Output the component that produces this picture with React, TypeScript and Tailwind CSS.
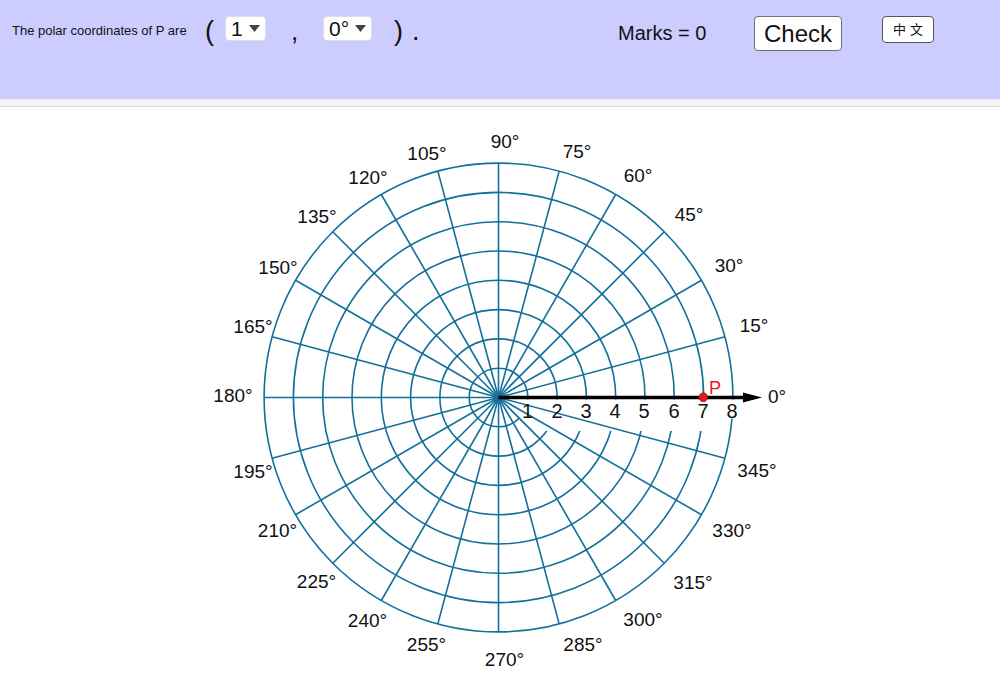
import React from "react";

const CX = 498.5;
const CY = 397.5;
const U = 29.3;
const GRID = "#12709a";

const degreeLabels: [string, number, number][] = [
  ["90°", 505, 141],
  ["75°", 577, 151],
  ["60°", 638, 175],
  ["45°", 689, 214.5],
  ["30°", 729, 265.5],
  ["15°", 754, 325.5],
  ["0°", 777, 396],
  ["345°", 757, 470.5],
  ["330°", 732, 530.5],
  ["315°", 693, 582.5],
  ["300°", 643, 619.5],
  ["285°", 583, 644.5],
  ["270°", 504.5, 659.5],
  ["255°", 426.5, 644.5],
  ["240°", 367.5, 620.5],
  ["225°", 316.5, 581],
  ["210°", 277.5, 530],
  ["195°", 253, 471],
  ["180°", 233, 395.5],
  ["165°", 253, 326],
  ["150°", 278, 267.5],
  ["135°", 317, 216.5],
  ["120°", 368, 177.5],
  ["105°", 427, 153],
];

const numberX = [527.5, 557, 586, 615, 644, 674, 703, 732];

function Caret() {
  return (
    <svg width="11" height="7" viewBox="0 0 11 7" className="block">
      <polygon points="0,0 11,0 5.5,7" fill="#444" />
    </svg>
  );
}

function Dropdown({ value, width }: { value: string; width: string }) {
  return (
    <div
      className={`${width} h-[25px] mt-[16px] bg-white border border-[#dcdcea] rounded-[4px] flex items-center pl-[5px] gap-[6px]`}
    >
      <span className="text-[21px] leading-none text-[#111]">{value}</span>
      <Caret />
    </div>
  );
}

function PolarGrid() {
  const R = 8 * U;
  const spokes = Array.from({ length: 24 }, (_, k) => {
    const a = (k * 15 * Math.PI) / 180;
    return { x: CX + R * Math.cos(a), y: CY - R * Math.sin(a) };
  });
  const font = "Liberation Sans, Arial, sans-serif";

  return (
    <svg width="1000" height="583" viewBox="0 107 1000 583" className="block">
      {[1, 2, 3, 4, 5, 6, 7].map((r) => (
        <circle key={r} cx={CX} cy={CY} r={r * U} fill="none" stroke={GRID} strokeWidth="1.6" />
      ))}
      {/* label background hides arcs under the numbers */}
      <rect x="519" y="399.5" width="226" height="31.5" fill="white" />
      {spokes.map((p, i) => (
        <line key={i} x1={CX} y1={CY} x2={p.x} y2={p.y} stroke={GRID} strokeWidth="1.6" />
      ))}
      <circle cx={CX} cy={CY} r={R} fill="none" stroke={GRID} strokeWidth="1.6" />
      <rect x="724" y="399.5" width="17" height="19" fill="white" />

      <line x1={CX} y1={CY} x2="746" y2={CY} stroke="black" strokeWidth="3.5" />
      <polygon points="743,392.5 762,397.5 743,402.5" fill="black" />

      <circle cx="703.3" cy="397.3" r="4.3" fill="#e8191b" stroke="#a80f10" strokeWidth="1" />
      <text x="715" y="393.5" fontSize="18" fill="#e8191b" fontFamily={font} textAnchor="middle">
        P
      </text>

      {numberX.map((x, i) => (
        <text key={i} x={x} y={417.5} fontSize="20" fill="#111" fontFamily={font} textAnchor="middle">
          {i + 1}
        </text>
      ))}

      {degreeLabels.map(([t, x, y]) => (
        <text key={t} x={x} y={y + 6.8} fontSize="19" fill="#111" fontFamily={font} textAnchor="middle">
          {t}
        </text>
      ))}
    </svg>
  );
}

export default function App() {
  return (
    <div className="w-[1000px] h-[690px] bg-white overflow-hidden font-['Liberation_Sans',Arial,sans-serif] text-[#111]">
      <div className="h-[99px] bg-[#ccccff] flex items-start pl-[12px]">
        <span className="w-[193px] mt-[23px] text-[13px] leading-[15px] whitespace-nowrap">The polar coordinates of P are</span>
        <span className="w-[20px] mt-[15px] text-[27px] leading-[32px]">(</span>
        <Dropdown value="1" width="w-[41px]" />
        <span className="w-[57px] pl-[25px] mt-[15px] text-[26px] leading-[32px]">,</span>
        <Dropdown value="0°" width="w-[49px]" />
        <div className="w-[246px] mt-[15px] flex text-[27px] leading-[32px]">
          <span className="pl-[22px]">)</span>
          <span className="pl-[9px]">.</span>
        </div>
        <span className="w-[136px] mt-[21px] text-[20px] leading-[24px]">Marks = 0</span>
        <button className="w-[88px] h-[35px] mt-[16px] bg-white border border-[#6f6f6f] rounded-[4px] text-[24px] leading-none flex items-center justify-center">
          Check
        </button>
        <button className="w-[52px] h-[27px] mt-[16px] ml-[40px] bg-white border border-[#555] rounded-[4px] text-[13px] leading-none tracking-[4px] pl-[4px] pb-[3px] flex items-center justify-center font-['Noto_Sans_CJK_TC',serif]">
          中文
        </button>
      </div>
      <div className="h-[8px] bg-[#f4f4f6] border-b border-[#d8d8d8]" />
      <PolarGrid />
    </div>
  );
}
